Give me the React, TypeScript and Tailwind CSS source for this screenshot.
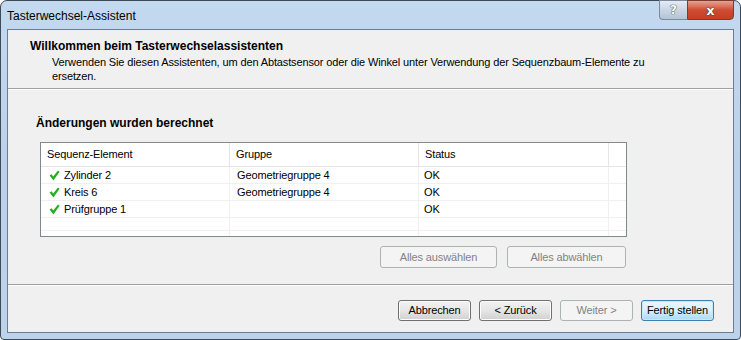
import React from 'react';

interface Row {
  element: string;
  group: string;
  status: string;
}

const rows: Row[] = [
  { element: 'Zylinder 2', group: 'Geometriegruppe 4', status: 'OK' },
  { element: 'Kreis 6', group: 'Geometriegruppe 4', status: 'OK' },
  { element: 'Prüfgruppe 1', group: '', status: 'OK' },
];

const Check = () => (
  <svg width="11" height="11" viewBox="0 0 11 11" className="shrink-0">
    <path d="M0.6 5.4 L2.6 4.2 L4.2 6.6 L9 0.6 L10.6 1.7 L4.4 10.4 Z" fill="#22b022" />
  </svg>
);

const Button = ({
  label,
  disabled,
  primary,
  className = '',
}: {
  label: string;
  disabled?: boolean;
  primary?: boolean;
  className?: string;
}) => {
  if (disabled) {
    return (
      <div
        className={`flex items-center justify-center rounded-[3px] border border-[#adb2b5] bg-[#f4f4f4] text-[#838383] ${className}`}
      >
        {label}
      </div>
    );
  }
  return (
    <div
      className={`flex items-center justify-center rounded-[3px] border text-black ${
        primary
          ? 'border-[#3c7fb1] bg-gradient-to-b from-[#eaf6fd] via-[#d9f0fc] to-[#a7d9f5] shadow-[inset_0_0_0_1px_#c8e8fa]'
          : 'border-[#707070] bg-gradient-to-b from-[#f2f2f2] via-[#e6e6e6] to-[#d0d0d0] shadow-[inset_0_0_0_1px_#fcfcfc]'
      } ${className}`}
    >
      {label}
    </div>
  );
};

const Separator = () => (
  <div className="border-t border-b border-t-[#a0a0a0] border-b-white" />
);

export default function App() {
  return (
    <div className="w-[741px] h-[340px] bg-white font-['Liberation_Sans',Arial,sans-serif] text-[11px] tracking-[-0.13px] text-black">
      <div className="w-[741px] h-[340px] flex flex-col rounded-t-[7px] rounded-b-[4px] border border-[#3e4a57] bg-gradient-to-b from-[#c3d9f0] via-[#b9d1ea] to-[#bcd3eb] px-[6px] pb-[6px]">
        {/* title bar */}
        <div className="h-[28px] flex items-start justify-between">
          <div className="pt-[7px] text-[12px] leading-[16px] tracking-normal">Tasterwechsel-Assistent</div>
          <div className="flex -mt-[1px]">
            <div className="w-[28px] h-[20px] rounded-bl-[4px] border border-[#7b8a9c] border-r-0 bg-gradient-to-b from-[#e4ecf5] via-[#c9d6e4] to-[#b4c4d6] flex items-center justify-center">
              <span className="font-['DejaVu_Sans',sans-serif] font-bold text-[12px] leading-none text-white [text-shadow:0_0_1px_#333,0_0_1px_#333]">
                ?
              </span>
            </div>
            <div className="w-[47px] h-[20px] rounded-br-[4px] border border-[#7a3c32] bg-gradient-to-b from-[#e5a292] via-[#cf4b33] to-[#c5401f] flex items-center justify-center">
              <span className="font-['DejaVu_Sans',sans-serif] font-bold text-[13px] leading-none text-white [text-shadow:0_0_1px_#222,0_0_1px_#222]">
                x
              </span>
            </div>
          </div>
        </div>

        {/* client area */}
        <div className="flex-1 flex flex-col border border-[#6d7c8e] bg-[#f0f0f0]">
          <div className="h-[58px] pt-[9px]">
            <div className="pl-[22px] font-bold text-[12px] leading-[15px] tracking-normal">
              Willkommen beim Tasterwechselassistenten
            </div>
            <div className="pl-[44px] leading-[14px] pt-[1px]">
              <div>
                Verwenden Sie diesen Assistenten, um den Abtastsensor oder die Winkel unter Verwendung der
                Sequenzbaum-Elemente zu
              </div>
              <div>ersetzen.</div>
            </div>
          </div>
          <Separator />

          <div className="h-[194px] flex flex-col">
            <div className="pl-[28px] pt-[26px] font-bold text-[12px] leading-[15px] tracking-normal">
              Änderungen wurden berechnet
            </div>

            <div className="ml-[32px] mt-[11px] w-[587px] h-[95px] border border-[#828790] bg-white flex flex-col overflow-hidden">
              {/* header */}
              <div className="h-[24px] flex border-b border-[#e5e5e5]">
                <div className="w-[189px] pl-[6px] flex items-center border-r border-[#e5e5e5]">Sequenz-Element</div>
                <div className="w-[189px] pl-[6px] flex items-center border-r border-[#e5e5e5]">Gruppe</div>
                <div className="w-[190px] pl-[6px] flex items-center border-r border-[#e5e5e5]">Status</div>
                <div className="flex-1" />
              </div>
              {rows.map((row) => (
                <div key={row.element} className="h-[17px] flex border-b border-[#f0f0f0]">
                  <div className="w-[189px] pl-[8px] flex items-center gap-[4px] border-r border-[#f0f0f0]">
                    <Check />
                    <span>{row.element}</span>
                  </div>
                  <div className="w-[189px] pl-[7px] flex items-center border-r border-[#f0f0f0]">{row.group}</div>
                  <div className="w-[190px] pl-[5px] flex items-center border-r border-[#f0f0f0]">{row.status}</div>
                  <div className="flex-1" />
                </div>
              ))}
              <div className="h-[13px] flex border-b border-[#f0f0f0]">
                <div className="w-[189px] border-r border-[#f0f0f0]" />
                <div className="w-[189px] border-r border-[#f0f0f0]" />
                <div className="w-[190px] border-r border-[#f0f0f0]" />
                <div className="flex-1" />
              </div>
              <div className="flex-1 flex">
                <div className="w-[189px] border-r border-[#f0f0f0]" />
                <div className="w-[189px] border-r border-[#f0f0f0]" />
                <div className="w-[190px] border-r border-[#f0f0f0]" />
              </div>
            </div>

            <div className="mt-[9px] ml-[372px] flex gap-[10px]">
              <Button label="Alles auswählen" disabled className="w-[117px] h-[22px]" />
              <Button label="Alles abwählen" disabled className="w-[119px] h-[22px]" />
            </div>
          </div>
          <Separator />

          <div className="flex-1 flex justify-end items-start pt-[14px] pr-[19px] gap-[8px]">
            <Button label="Abbrechen" className="w-[73px] h-[21px]" />
            <Button label="< Zurück" className="w-[73px] h-[21px]" />
            <Button label="Weiter >" disabled className="w-[73px] h-[21px]" />
            <Button label="Fertig stellen" primary className="w-[73px] h-[21px]" />
          </div>
        </div>
      </div>
    </div>
  );
}
